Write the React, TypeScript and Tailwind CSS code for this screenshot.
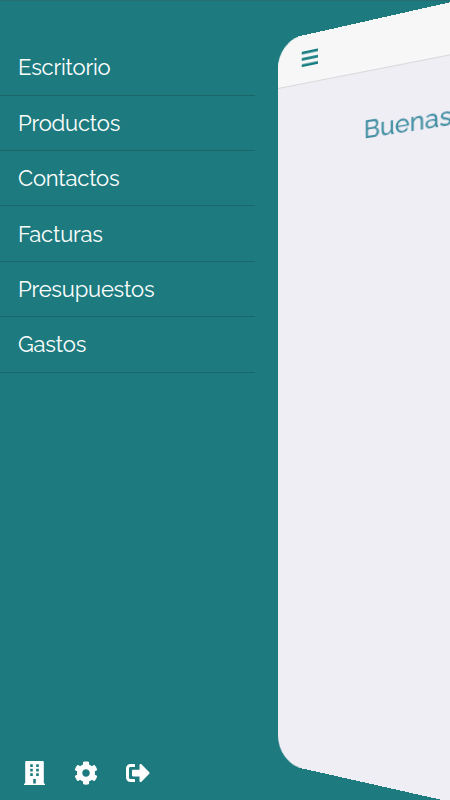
import { FaCog, FaSignOutAlt } from "react-icons/fa";

const menuItems = ["Escritorio", "Productos", "Contactos", "Facturas", "Presupuestos", "Gastos"];

const MenuIcon = () => (
  <svg viewBox="0 0 18 18" className="w-[18px] h-[18px]" fill="currentColor">
    <rect x="0" y="1" width="18" height="2.6" />
    <rect x="0" y="7.2" width="18" height="2.6" />
    <rect x="0" y="13.4" width="18" height="2.6" />
  </svg>
);

const BuildingIcon = () => (
  <svg viewBox="0 0 21 24" className="w-[21px] h-6" fill="currentColor" fillRule="evenodd">
    <path d="M2.2 0h16.6q1 0 1 1v21.4h.7q.5 0 .5.5V24H0v-1.1q0-.5.5-.5h.7V1q0-1 1-1ZM6.2 3.2h2.6v2.7H6.2ZM12.2 3.2h2.6v2.7h-2.6ZM6.2 7.7h2.6v2.7H6.2ZM12.2 7.7h2.6v2.7h-2.6ZM6.2 12.2h2.6v2.7H6.2ZM12.2 12.2h2.6v2.7h-2.6ZM9.2 18h2.6v4.4H9.2Z" />
  </svg>
);

const SideMenu = () => {
  return (
    <aside className="flex flex-col justify-between shrink-0 w-[278px] h-full pt-[40.3px] pb-[15px] text-white">
      <nav className="w-[255px]">
        {menuItems.map((label) => (
          <a
            key={label}
            href="#"
            className="flex items-center h-[55.4px] pl-[18px] border-b border-[#1b666a] text-[22px] leading-none tracking-[-0.2px]"
          >
            {label}
          </a>
        ))}
      </nav>
      <div className="flex items-center gap-[28.5px] pl-6">
        <BuildingIcon />
        <FaCog className="size-6" />
        <FaSignOutAlt className="size-6" />
      </div>
    </aside>
  );
};

const Screen = () => {
  return (
    <main className="shrink-0 w-[420px] h-[722px] mt-[41px] rounded-[27px] overflow-hidden bg-[#efeef4] origin-left [transform:perspective(926px)_rotateY(-30deg)]">
      <header className="flex items-center h-12 pl-[27px] border-b border-[#d9d9dc] bg-[#f7f7f7] text-[#127c80]">
        <MenuIcon />
      </header>
      <h1 className="pl-[94px] pt-[37.5px] text-[25px] leading-[32px] font-medium whitespace-nowrap text-[#438fa3]">
        Buenas
      </h1>
    </main>
  );
};

export default function App() {
  return (
    <div className="flex w-[450px] h-[800px] overflow-hidden bg-[#1d7b7f] shadow-[inset_0_1px_0_#276d71] font-['Raleway','Lato',sans-serif]">
      <SideMenu />
      <Screen />
    </div>
  );
}
